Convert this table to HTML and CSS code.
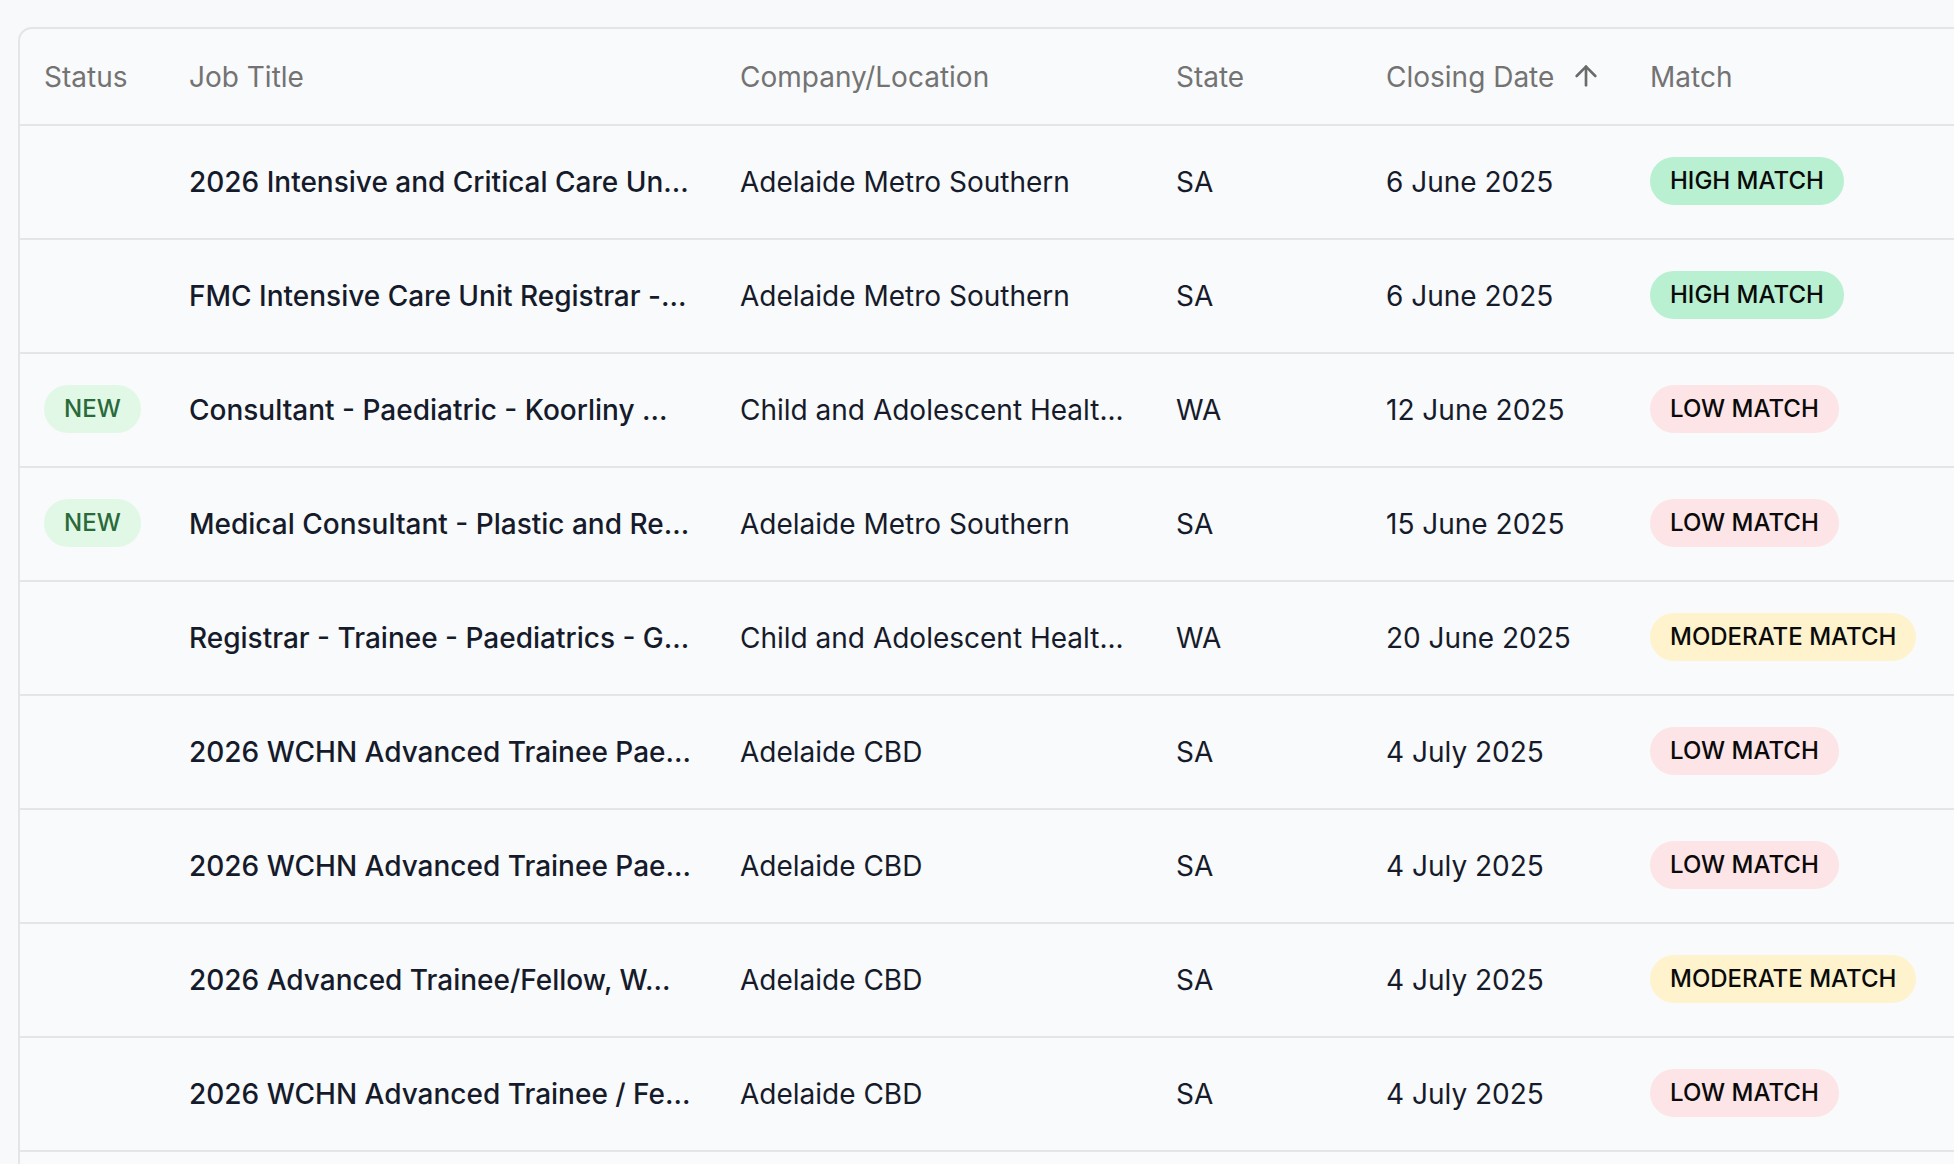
FILE: index.html
```html
<!DOCTYPE html>
<html lang="en">
<head>
<meta charset="utf-8">
<title>Jobs</title>
<link rel="stylesheet" href="styles.css">
</head>
<body>
<div class="page">
  <div class="card">
    <table class="jobs">
      <colgroup>
        <col class="c-status">
        <col class="c-title">
        <col class="c-company">
        <col class="c-state">
        <col class="c-date">
        <col class="c-match">
      </colgroup>
      <thead>
        <tr>
          <th>Status</th>
          <th>Job Title</th>
          <th>Company/Location</th>
          <th>State</th>
          <th><span class="sort">Closing Date<svg class="arrow" viewBox="0 0 24 24" width="32" height="32" fill="none" stroke="currentColor" stroke-width="2" stroke-linecap="round" stroke-linejoin="round"><path d="M12 19V5"/><path d="m5 12 7-7 7 7"/></svg></span></th>
          <th>Match</th>
        </tr>
      </thead>
      <tbody>
        <tr>
          <td></td>
          <td class="title">2026 Intensive and Critical Care Un...</td>
          <td>Adelaide Metro Southern</td>
          <td>SA</td>
          <td>6 June 2025</td>
          <td><span class="badge high">HIGH MATCH</span></td>
        </tr>
        <tr>
          <td></td>
          <td class="title">FMC Intensive Care Unit Registrar -...</td>
          <td>Adelaide Metro Southern</td>
          <td>SA</td>
          <td>6 June 2025</td>
          <td><span class="badge high">HIGH MATCH</span></td>
        </tr>
        <tr>
          <td><span class="badge new">NEW</span></td>
          <td class="title">Consultant - Paediatric - Koorliny ...</td>
          <td>Child and Adolescent Healt...</td>
          <td>WA</td>
          <td>12 June 2025</td>
          <td><span class="badge low">LOW MATCH</span></td>
        </tr>
        <tr>
          <td><span class="badge new">NEW</span></td>
          <td class="title">Medical Consultant - Plastic and Re...</td>
          <td>Adelaide Metro Southern</td>
          <td>SA</td>
          <td>15 June 2025</td>
          <td><span class="badge low">LOW MATCH</span></td>
        </tr>
        <tr>
          <td></td>
          <td class="title">Registrar - Trainee - Paediatrics - G...</td>
          <td>Child and Adolescent Healt...</td>
          <td>WA</td>
          <td>20 June 2025</td>
          <td><span class="badge moderate">MODERATE MATCH</span></td>
        </tr>
        <tr>
          <td></td>
          <td class="title">2026 WCHN Advanced Trainee Pae...</td>
          <td>Adelaide CBD</td>
          <td>SA</td>
          <td>4 July 2025</td>
          <td><span class="badge low">LOW MATCH</span></td>
        </tr>
        <tr>
          <td></td>
          <td class="title">2026 WCHN Advanced Trainee Pae...</td>
          <td>Adelaide CBD</td>
          <td>SA</td>
          <td>4 July 2025</td>
          <td><span class="badge low">LOW MATCH</span></td>
        </tr>
        <tr>
          <td></td>
          <td class="title">2026 Advanced Trainee/Fellow, W...</td>
          <td>Adelaide CBD</td>
          <td>SA</td>
          <td>4 July 2025</td>
          <td><span class="badge moderate">MODERATE MATCH</span></td>
        </tr>
        <tr>
          <td></td>
          <td class="title">2026 WCHN Advanced Trainee / Fe...</td>
          <td>Adelaide CBD</td>
          <td>SA</td>
          <td>4 July 2025</td>
          <td><span class="badge low">LOW MATCH</span></td>
        </tr>
      </tbody>
    </table>
  </div>
</div>
</body>
</html>
```

FILE: styles.css
```css
* {
  box-sizing: border-box;
}

html, body {
  margin: 0;
  padding: 0;
  background: #f8f9fb;
  overflow: hidden;
  height: 100%;
}

body {
  font-family: Inter, "Noto Sans", sans-serif;
  color: #161b2b;
  font-size: 28px;
}

.page {
  padding: 27px 0 0 18px;
  width: 2100px;
}

.card {
  width: 2060px;
  min-height: 1200px;
  background: #f9fafb;
  border: 2px solid #e4e5e8;
  border-radius: 14px 14px 0 0;
  overflow: hidden;
}

.jobs {
  width: 100%;
  border-collapse: collapse;
  table-layout: fixed;
}

.c-status { width: 145px; }
.c-title { width: 551px; }
.c-company { width: 436px; }
.c-state { width: 210px; }
.c-date { width: 264px; }
.c-match { width: auto; }

.jobs th {
  height: 96px;
  padding: 0 24px;
  text-align: left;
  font-weight: 400;
  color: #737373;
  white-space: nowrap;
  border-bottom: 2px solid #e4e5e8;
  vertical-align: middle;
}

.sort {
  display: inline-flex;
  align-items: center;
  gap: 16px;
}

.arrow {
  color: #6b6b6b;
  position: relative;
  top: -1px;
}

.jobs td {
  height: 114px;
  padding: 0 24px;
  white-space: nowrap;
  border-bottom: 2px solid #e4e5e8;
  vertical-align: middle;
}

.jobs td.title {
  font-weight: 500;
}

.badge {
  display: inline-block;
  padding: 8px 20px;
  line-height: 32px;
  font-size: 24px;
  font-weight: 500;
  border-radius: 999px;
  color: #0a0a0a;
  position: relative;
  top: -1px;
}

.badge.high { background: #b8f0d1; }
.badge.low { background: #fde4e6; }
.badge.moderate { background: #fef3cd; }
.badge.new {
  background: #e1f8e7;
  color: #2a6a3a;
}
```
